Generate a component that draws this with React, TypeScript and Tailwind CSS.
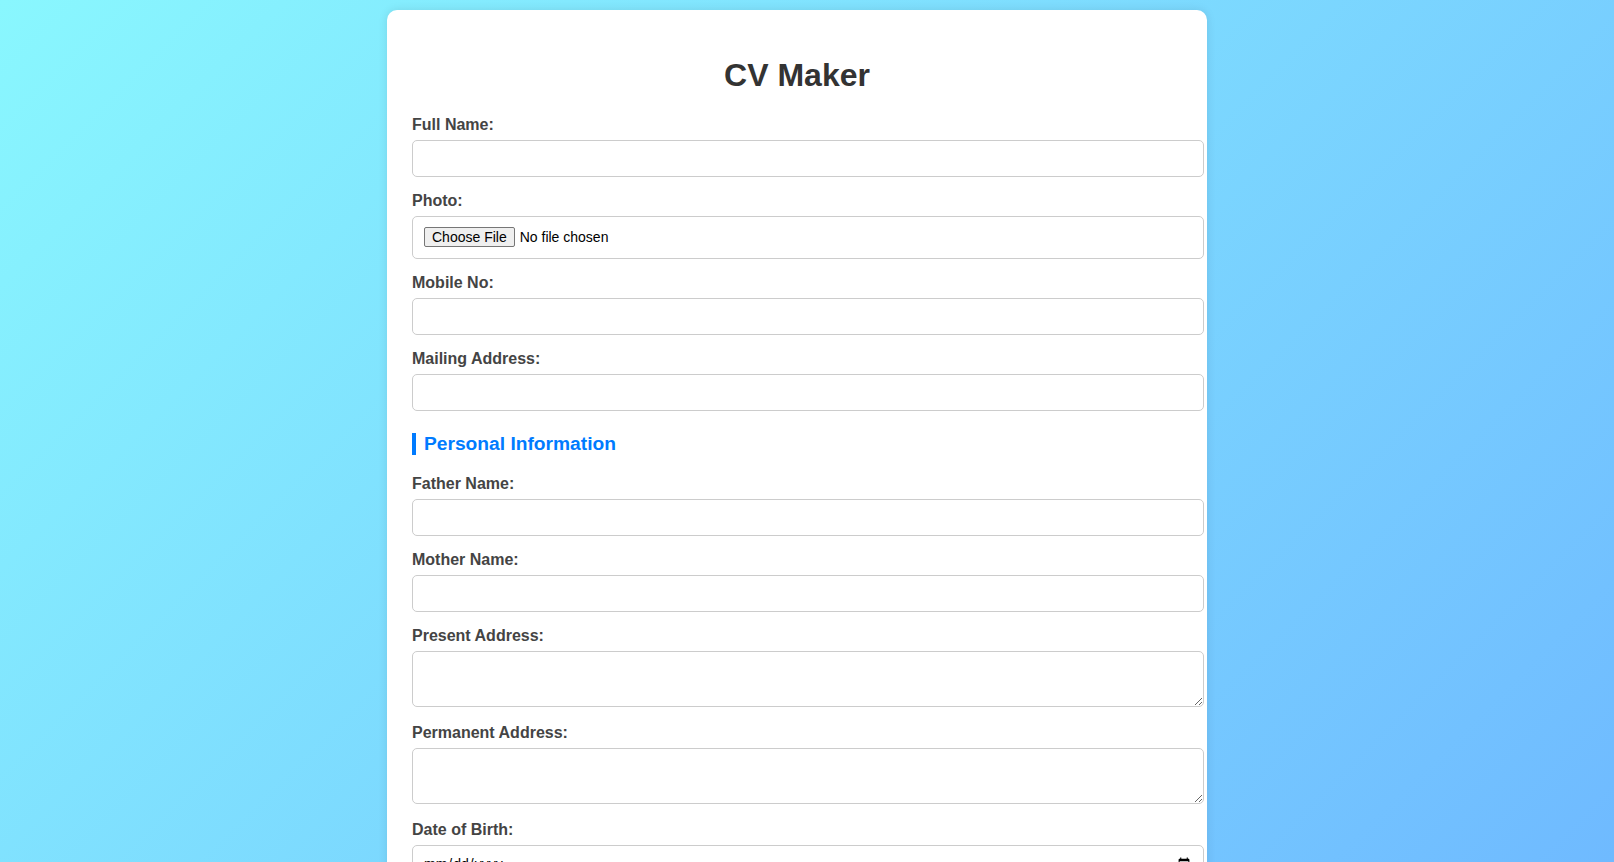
import React, { useState } from 'react';

interface FieldProps {
  label: string;
  name: string;
  type?: string;
  value: string;
  onChange: (name: string, value: string) => void;
}

const inputClass =
  'mb-[15px] box-content block h-[15px] w-full rounded-[5px] border border-[#ccc] bg-white p-[10px] text-[14px] text-black outline-none focus:border-[#007bff]';

const textareaClass =
  'mb-[17px] box-content block h-[34px] w-full rounded-[5px] border border-[#ccc] bg-white p-[10px] text-[14px] text-black outline-none focus:border-[#007bff]';

const Label: React.FC<{ htmlFor: string; children: React.ReactNode }> = ({ htmlFor, children }) => (
  <label htmlFor={htmlFor} className="mb-[6px] block text-[16px] font-bold text-[#444]">
    {children}
  </label>
);

const TextField: React.FC<FieldProps> = ({ label, name, type = 'text', value, onChange }) => (
  <div>
    <Label htmlFor={name}>{label}</Label>
    <input
      id={name}
      name={name}
      type={type}
      value={value}
      onChange={(e) => onChange(name, e.target.value)}
      className={inputClass}
    />
  </div>
);

const AreaField: React.FC<FieldProps> = ({ label, name, value, onChange }) => (
  <div>
    <Label htmlFor={name}>{label}</Label>
    <textarea
      id={name}
      name={name}
      value={value}
      onChange={(e) => onChange(name, e.target.value)}
      className={textareaClass}
    />
  </div>
);

const SectionTitle: React.FC<{ children: React.ReactNode }> = ({ children }) => (
  <h2 className="mt-[22px] mb-[20px] border-l-4 border-[#007bff] pl-[8px] text-[19.2px] font-bold text-[#007bff]">
    {children}
  </h2>
);

export default function App() {
  const [form, setForm] = useState<Record<string, string>>({});

  const handleChange = (name: string, value: string) => {
    setForm((prev) => ({ ...prev, [name]: value }));
  };

  const v = (name: string) => form[name] || '';

  return (
    <div className="min-h-screen bg-[linear-gradient(135deg,#89f7fe,#6fbaff)] bg-fixed pt-[10px] pr-[20px] pb-[20px] font-['Liberation_Sans',Arial,sans-serif] leading-[normal]">
      <div className="mx-auto w-[820px] rounded-[10px] bg-white p-[25px] shadow-[0_0_10px_rgba(0,0,0,0.1)]">
        <h1 className="mt-[22px] mb-[22px] text-center text-[32px] font-bold text-[#333]">CV Maker</h1>

        <form onSubmit={(e) => e.preventDefault()}>
          <TextField label="Full Name:" name="fullName" value={v('fullName')} onChange={handleChange} />

          {/* Photo */}
          <div>
            <Label htmlFor="photo">Photo:</Label>
            <input
              id="photo"
              type="file"
              accept="image/*"
              className="mb-[15px] box-content block h-[21px] w-full rounded-[5px] border border-[#ccc] bg-white p-[10px] text-[14px] text-black file:mr-[5px] file:ml-[1px] file:rounded-[2px] file:border file:border-solid file:border-[#767676] file:bg-[#efefef] file:px-[7px] file:py-[1px] file:text-[14px] file:text-black"
            />
          </div>

          <TextField label="Mobile No:" name="mobile" type="tel" value={v('mobile')} onChange={handleChange} />
          <TextField label="Mailing Address:" name="mailing" value={v('mailing')} onChange={handleChange} />

          <SectionTitle>Personal Information</SectionTitle>

          <TextField label="Father Name:" name="father" value={v('father')} onChange={handleChange} />
          <TextField label="Mother Name:" name="mother" value={v('mother')} onChange={handleChange} />
          <AreaField label="Present Address:" name="present" value={v('present')} onChange={handleChange} />
          <AreaField label="Permanent Address:" name="permanent" value={v('permanent')} onChange={handleChange} />

          {/* Date of Birth */}
          <div>
            <Label htmlFor="dob">Date of Birth:</Label>
            <input
              id="dob"
              type="date"
              value={v('dob')}
              onChange={(e) => handleChange('dob', e.target.value)}
              className={'mt-[3px] ' + inputClass}
            />
          </div>

          <TextField label="Nationality:" name="nationality" value={v('nationality')} onChange={handleChange} />
          <TextField label="Religion:" name="religion" value={v('religion')} onChange={handleChange} />

          <SectionTitle>Educational Qualification</SectionTitle>
          <AreaField label="Education:" name="education" value={v('education')} onChange={handleChange} />

          <button
            type="submit"
            className="mt-[10px] w-full rounded-[5px] bg-[#007bff] py-[12px] text-[16px] font-bold text-white"
          >
            Generate CV
          </button>
        </form>
      </div>
    </div>
  );
}
